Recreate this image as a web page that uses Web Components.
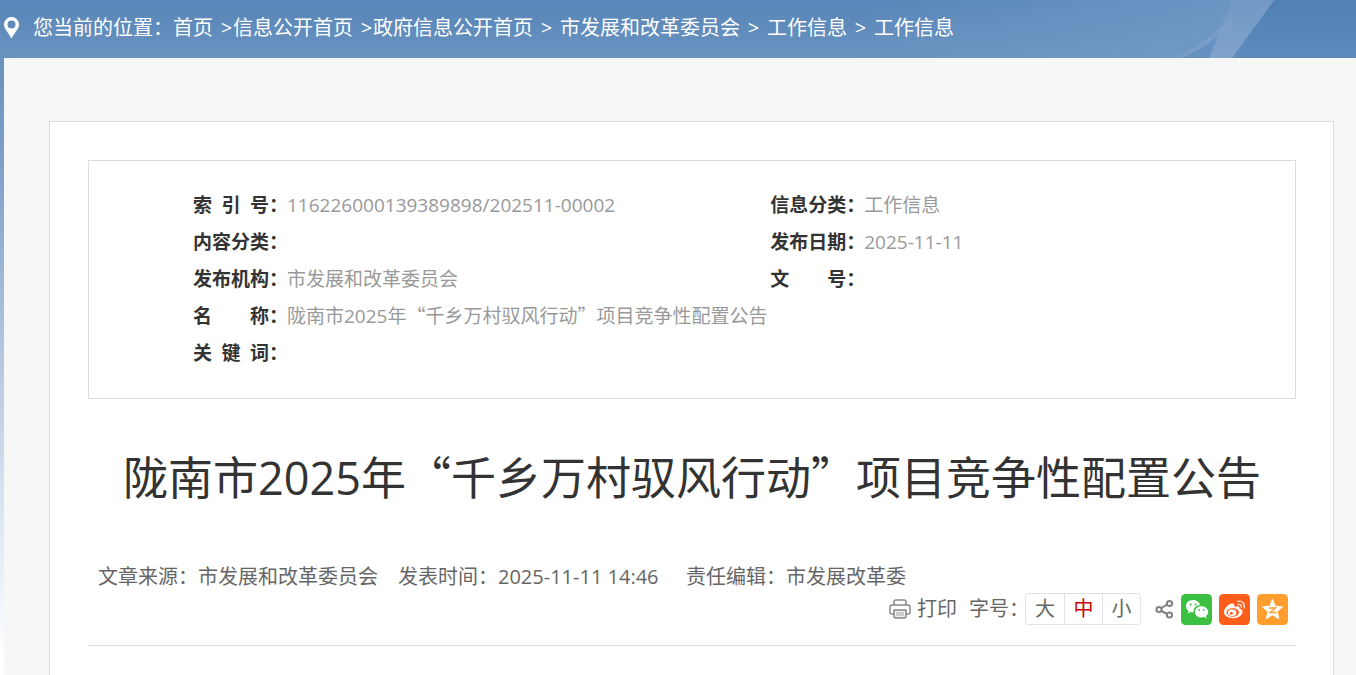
<!DOCTYPE html>
<html lang="zh-CN">
<head>
<meta charset="utf-8">
<title>陇南市2025年“千乡万村驭风行动”项目竞争性配置公告</title>
<style>
  body {
    margin: 0;
    font-family: "Open Sans", "Noto Sans CJK SC", sans-serif;
    font-size: 20px;
    line-height: 30px;
    color: #666;
    background: #fff linear-gradient(#5886b9 0, #6992bf 58px, #7f9fc9 160px, #b4c8e0 360px, #e0e9f4 530px, #fff 660px) no-repeat;
  }
  .cjk { font-family: "Noto Sans CJK SC", sans-serif; line-height: 1; }
  time { display: inline-block; min-width: 168px; }
</style>
</head>
<body>
<gov-page>
  <crumb-bar slot="top">
    <crumb-link>首页</crumb-link>
    <crumb-link tight>信息公开首页</crumb-link>
    <crumb-link tight>政府信息公开首页</crumb-link>
    <crumb-link>市发展和改革委员会</crumb-link>
    <crumb-link>工作信息</crumb-link>
    <crumb-link>工作信息</crumb-link>
  </crumb-bar>
  <info-box>
    <info-item label="索 引 号">116226000139389898/202511-00002</info-item>
    <info-item label="信息分类">工作信息</info-item>
    <info-item label="内容分类"></info-item>
    <info-item label="发布日期">2025-11-11</info-item>
    <info-item label="发布机构">市发展和改革委员会</info-item>
    <info-item label="文 号"></info-item>
    <info-item label="名 称" wide>陇南市2025年<span class="cjk">“</span>千乡万村驭风行动<span class="cjk">”</span>项目竞争性配置公告</info-item>
    <info-item label="关 键 词" wide></info-item>
  </info-box>
  <article-title>陇南市2025年<span class="cjk">“</span>千乡万村驭风行动<span class="cjk">”</span>项目竞争性配置公告</article-title>
  <article-meta>
    <span>文章来源：市发展和改革委员会</span>
    <span>发表时间：<time datetime="2025-11-11T14:46">2025-11-11 14:46</time></span>
    <span>责任编辑：市发展改革委</span>
    <article-tools slot="tools"></article-tools>
  </article-meta>
</gov-page>

<script>
const define = (name, html, setup) => {
  const template = document.createElement('template');
  template.innerHTML = html;
  customElements.define(name, class extends HTMLElement {
    constructor() {
      super();
      this.attachShadow({ mode: 'open' }).append(template.content.cloneNode(true));
    }
    connectedCallback() { if (setup) setup(this, this.shadowRoot); }
  });
};

define('gov-page', `
  <style>
    :host { display: flex; flex-direction: column; min-height: 100vh; }
    main { flex: 1; display: flex; margin-left: 4px; padding: 63px 22px 0 45px; background: #f7f7f7; }
    article { flex: 1; min-width: 0; padding: 38px 37px 0 38px; background: #fff; border: 1px solid #dcdcdc; border-bottom: 0; }
  </style>
  <slot name="top"></slot>
  <main><article><slot></slot></article></main>`);

define('crumb-bar', `
  <style>
    :host { display: block; position: relative; overflow: hidden; color: #fff; background: linear-gradient(#5886b9, #6992bf); }
    .art { position: absolute; top: 0; right: 0; width: 500px; height: 58px; }
    nav { position: relative; display: flex; align-items: center; padding: 13px 4px 15px; }
    .pin { width: 15px; height: 22px; margin-right: 14px; flex: none; }
    .links { display: flex; flex-wrap: wrap; }
  </style>
  <svg class="art" viewBox="0 0 500 58" aria-hidden="true">
    <defs>
      <linearGradient id="a" x1="0" x2="1"><stop offset="0" stop-color="#7ba0cb" stop-opacity="0"/><stop offset="1" stop-color="#7ba0cb" stop-opacity=".6"/></linearGradient>
      <linearGradient id="b" x2="0" y2="1"><stop stop-color="#5080b4"/><stop offset="1" stop-color="#5f8abd"/></linearGradient>
      <linearGradient id="c" x2="0" y2="1"><stop stop-color="#7398c6"/><stop offset="1" stop-color="#7fa3cb"/></linearGradient>
    </defs>
    <path d="M0 0H420L376 58H0z" fill="url(#a)"/>
    <path d="M418 0H500V58H376z" fill="url(#b)"/>
    <path d="M363 30C350 42 337 52 325 58H353z" fill="#6590c0"/>
    <path d="M376 0H418L376 58H353L365 30z" fill="url(#c)"/>
    <path d="M376 16C356 36 340 48 320 58H326C345 50 362 38 376 24z" fill="#7fa1cc" opacity=".7"/>
  </svg>
  <nav aria-label="您当前的位置">
    <svg class="pin" viewBox="0 0 15 22" aria-hidden="true"><path fill="#fff" fill-rule="evenodd" d="M7.500 0A7.500 7.500 0 0 0 0 7.500C0 12 5 16.500 7.500 21.500C10 16.500 15 12 15 7.500A7.500 7.500 0 0 0 7.500 0zM7.500 3.500A4 4 0 1 1 7.500 11.500A4 4 0 0 1 7.500 3.500z"/></svg>
    <span>您当前的位置：</span>
    <div class="links"><slot></slot></div>
  </nav>`);

define('crumb-link', `
  <style>
    :host { display: flex; }
    :host(:first-child) .sep { display: none; }
    .sep { width: 13px; padding: 0 7px; text-align: center; }
    :host([tight]) .sep { padding-right: 0; }
    a { color: inherit; text-decoration: none; }
  </style>
  <span class="sep">&gt;</span><a href="#"><slot></slot></a>`);

define('info-box', `
  <style>
    :host { display: block; padding: 26px 0 26px 104px; border: 1px solid #dcdcdc; font-size: 19px; line-height: 37px; }
    div { display: grid; grid-template-columns: 11fr 10fr; grid-auto-rows: minmax(37px, auto); }
  </style>
  <div><slot></slot></div>`);

define('info-item', `
  <style>
    :host { display: block; }
    :host([wide]) { grid-column: 1 / -1; }
    dl { display: flex; margin: 0; }
    dt { display: flex; width: 94px; flex: none; font-weight: 700; color: #333; }
    .name { width: 76px; flex: none; text-align: justify; text-align-last: justify; }
    dd { margin: 0; color: #999; }
  </style>
  <dl><dt><span class="name"></span>：</dt><dd><slot></slot></dd></dl>`,
  (host, root) => { root.querySelector('.name').textContent = host.getAttribute('label'); });

define('article-title', `
  <style>
    :host { display: block; padding: 49px 0 54px; }
    h1 { margin: 0; font-size: 45px; line-height: 60px; font-weight: 400; color: #333; text-align: center; }
  </style>
  <h1><slot></slot></h1>`);

define('article-meta', `
  <style>
    :host { display: block; padding-bottom: 20px; border-bottom: 1px solid #dcdcdc; }
    .facts { display: flex; flex-wrap: wrap; column-gap: 20px; padding-left: 10px; }
  </style>
  <div class="facts"><slot></slot></div>
  <slot name="tools"></slot>`);

define('article-tools', `
  <style>
    :host { display: flex; justify-content: flex-end; align-items: center; padding: 1px 8px 0 0; }
    button { font: inherit; color: inherit; margin: 0; padding: 0; border: 0; background: none; cursor: pointer; }
    svg { display: block; }
    .print { display: flex; align-items: center; gap: 6px; margin-right: 12px; }
    .label { width: 56px; white-space: nowrap; }
    .sizes { display: flex; border: 1px solid #e3e3e3; border-radius: 3px; margin-right: 14px; }
    .sizes button { width: 38px; line-height: 30px; }
    .sizes button + button { border-left: 1px solid #e3e3e3; }
    .sizes button[aria-pressed=true] { color: #c00; }
    .share { display: flex; align-items: center; gap: 7px; }
  </style>
  <button class="print" type="button">
    <svg width="22" height="20" viewBox="0 0 22 20" fill="none" stroke="#888" stroke-width="1.500" aria-hidden="true"><path d="M5 6V3Q5 1 7 1H15Q17 1 17 3V6"/><path d="M5 15H3Q1 15 1 13V8Q1 6 3 6H19Q21 6 21 8V13Q21 15 19 15H17"/><path d="M5 11H17V17Q17 19 15 19H7Q5 19 5 17z" fill="#eee"/><path d="M7 14H15M7 16H15" stroke="#aaa" stroke-width="1"/></svg>
    打印
  </button>
  <span class="label" id="size">字号：</span>
  <div class="sizes" role="group" aria-labelledby="size">
    <button type="button">大</button><button type="button" aria-pressed="true">中</button><button type="button">小</button>
  </div>
  <div class="share">
    <button type="button" aria-label="分享"><svg width="19" height="20" viewBox="0 0 19 20" fill="none" stroke="#808080" stroke-width="2"><path d="M6.500 9L12 5.500M6.500 12L12 15"/><circle cx="4" cy="10.500" r="2.600"/><circle cx="14.500" cy="4.500" r="2.600"/><circle cx="14.500" cy="16" r="2.600"/></svg></button>
    <button type="button" aria-label="微信"><svg width="31" height="31" viewBox="0 0 31 31"><rect width="31" height="31" rx="4.500" fill="#3cc042"/><path fill="#fff" d="M12 6C7.800 6 5 8.800 5 12.200C5 14.200 6 15.800 7.600 17L7 19.500L9.800 18C10.600 18.200 11.300 18.300 12.500 18.300C12.200 13.500 15.500 11.300 19 11.300C18.500 8 15.500 6 12 6z"/><path fill="#fff" d="M20.500 12.200C16.800 12.200 14 14.800 14 17.900C14 21.200 17 23.500 20.500 23.500C21.400 23.500 22.200 23.400 23 23.100L25.500 24.400L24.900 22.100C26.300 21.100 27.200 19.600 27.200 17.900C27.200 14.800 24.200 12.200 20.500 12.200z"/><g fill="#3cc042"><circle cx="9.700" cy="10.500" r="1"/><circle cx="14.500" cy="10.500" r="1"/><circle cx="18.300" cy="16" r=".9"/><circle cx="22.700" cy="16" r=".9"/></g></svg></button>
    <button type="button" aria-label="微博"><svg width="31" height="31" viewBox="0 0 31 31"><rect width="31" height="31" rx="4.500" fill="#ff5e1a"/><path fill="#fff" d="M13 9.500C10 9.500 5 14.500 5 18.300C5 22 9.500 24.200 14 24.200C19.500 24.200 23.500 21.200 23.500 18C23.500 16 22 15 20.300 14.600C20.800 13 20.500 11.200 15.500 13C15.800 11.500 15.500 9.500 13 9.500z"/><ellipse cx="13.800" cy="18.500" rx="6.200" ry="4.200" fill="#ff5e1a"/><ellipse cx="13.200" cy="18.700" rx="4.200" ry="3.300" fill="#fff"/><circle cx="12.300" cy="19.200" r="1.500" fill="#ff5e1a"/><path d="M18.500 7.500C22.500 6 26.500 9.500 25 14M19.300 10.500C21.500 9.900 23 11.300 22.300 13.400" fill="none" stroke="#fff" stroke-opacity=".8" stroke-width="1.400" stroke-linecap="round"/></svg></button>
    <button type="button" aria-label="QQ空间"><svg width="31" height="31" viewBox="0 0 31 31"><rect width="31" height="31" rx="4.500" fill="#ff9e2c"/><path fill="#fff" stroke="#fff" stroke-linejoin="round" d="M15.500 5.500L18.300 12.300L25.500 12.900L20 17.600L21.800 24.700L15.500 20.900L9.200 24.700L11 17.600L5.500 12.900L12.700 12.300z"/><path d="M12 14H18.500L13 18.500H19.500" fill="none" stroke="#ff9e2c" stroke-width="1.300"/></svg></button>
  </div>`);
</script>
</body>
</html>
